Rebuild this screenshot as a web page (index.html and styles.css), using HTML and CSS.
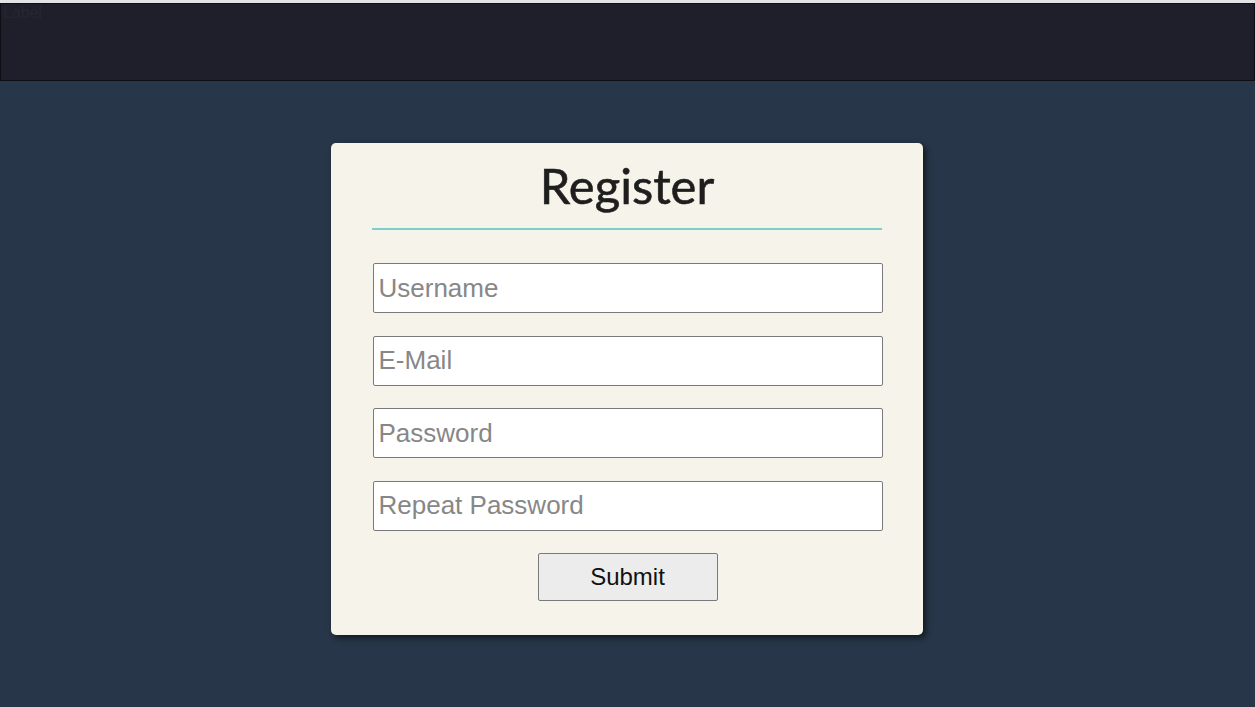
FILE: index.html
```html
<!DOCTYPE html>
<html lang="en">
<head>
<meta charset="utf-8">
<title>Register</title>
<link rel="stylesheet" href="styles.css">
</head>
<body>
<div class="topstrip"></div>
<header class="navbar"><span class="nav-label">Label</span></header>
<main class="main">
  <form class="card">
    <h1 class="title">Register</h1>
    <div class="divider"></div>
    <div class="fields">
      <input class="field" type="text" placeholder="Username">
      <input class="field" type="email" placeholder="E-Mail">
      <input class="field" type="password" placeholder="Password">
      <input class="field" type="password" placeholder="Repeat Password">
      <button class="submit" type="button">Submit</button>
    </div>
  </form>
</main>
</body>
</html>
```
FILE: styles.css
```css
* { box-sizing: border-box; }
html, body { margin: 0; padding: 0; height: 100%; }
body {
  background: #273648;
  font-family: "Liberation Sans", Arial, sans-serif;
  display: flex;
  flex-direction: column;
}
.topstrip {
  height: 3px;
  background: #e3e3e3;
}
.navbar {
  height: 78px;
  background: #1f1f2c;
  border: 1px solid #0e0e14;
  padding: 0 2px;
}
.nav-label {
  font-size: 16px;
  color: #26262f;
  line-height: 18px;
}
.main {
  flex: 1;
  display: flex;
  justify-content: center;
  padding-top: 62px;
}
.card {
  width: 592px;
  height: 492px;
  margin-right: 2px;
  background: #f6f4ea;
  border-radius: 5px;
  box-shadow: 3px 3px 6px rgba(0, 0, 0, 0.55);
  padding: 0 40px 0 41px;
  display: flex;
  flex-direction: column;
  align-items: center;
}
.title {
  margin: 11px 0 0;
  font-family: Lato, "Open Sans", sans-serif;
  font-weight: 400;
  font-size: 49px;
  line-height: 62px;
  color: #1e1e1e;
  -webkit-text-stroke: 0.6px #1e1e1e;
}
.divider {
  width: 510px;
  height: 2px;
  background: #7ccfcc;
  margin-top: 12px;
  align-self: flex-start;
}
.fields {
  width: 100%;
  display: flex;
  flex-direction: column;
  align-items: center;
  gap: 22.5px;
  margin-top: 33px;
}
.field {
  width: 510px;
  height: 50px;
  margin-left: 1px;
  border: 1px solid #7a7a7a;
  border-radius: 2px;
  background: #ffffff;
  padding: 0 5px;
  font-family: "Liberation Sans", Arial, sans-serif;
  font-size: 26px;
  color: #222;
}
.field::placeholder { color: #878787; }
.submit {
  width: 180px;
  height: 48px;
  margin-left: 1px;
  background: #ececec;
  border: 1px solid #7a7a7a;
  border-radius: 2px;
  font-family: "Liberation Sans", Arial, sans-serif;
  font-size: 24px;
  color: #111;
}
```
